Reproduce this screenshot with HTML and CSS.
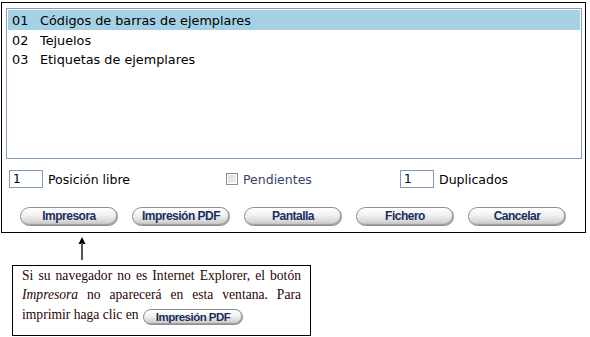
FILE: index.html
```html
<!DOCTYPE html>
<html lang="es">
<head>
    <meta charset="UTF-8">
    <title>Imprimir etiquetas</title>
    <link rel="stylesheet" href="styles.css">
</head>
<body>
    <div class="panel">
        <ul class="listbox">
            <li class="selected"><span class="code">01</span>Códigos de barras de ejemplares</li>
            <li><span class="code">02</span>Tejuelos</li>
            <li><span class="code">03</span>Etiquetas de ejemplares</li>
        </ul>
        <div class="options">
            <label class="field"><input class="num" type="text" value="1">Posición libre</label>
            <label class="field check"><span class="box"></span>Pendientes</label>
            <label class="field"><input class="num" type="text" value="1">Duplicados</label>
        </div>
        <div class="actions">
            <button class="pill">Impresora</button>
            <button class="pill">Impresión PDF</button>
            <button class="pill">Pantalla</button>
            <button class="pill">Fichero</button>
            <button class="pill">Cancelar</button>
        </div>
    </div>

    <div class="pointer">
        <svg xmlns="http://www.w3.org/2000/svg" width="10" height="24" viewBox="0 0 10 24">
            <path d="M5 1 L8.5 8 L1.5 8 Z" fill="#000"/>
            <rect x="4" y="7" width="2" height="17" fill="#555"/>
        </svg>
    </div>

    <div class="note">
        <p class="line">Si su navegador no es Internet Explorer, el botón <em>Impresora</em> no aparecerá en esta ventana. Para</p>
        <p class="line last">imprimir haga clic en <span class="pill small">Impresión PDF</span></p>
    </div>
</body>
</html>
```

FILE: styles.css
```css
* {
    box-sizing: border-box;
}

body {
    margin: 0;
    background: #ffffff;
    color: #000000;
    font-family: "DejaVu Sans", Verdana, sans-serif;
}

.panel {
    width: 585px;
    height: 231px;
    margin: 2px 0 0 1px;
    padding: 5px 0 0 4px;
    border: 1px solid #000000;
}

.listbox {
    list-style: none;
    width: 576px;
    height: 151px;
    margin: 0;
    padding: 1px;
    border: 1px solid #7f9db9;
    font-size: 12.8px;
}

.listbox li {
    height: 19.5px;
    line-height: 21px;
    padding-left: 4px;
}

.listbox li.selected {
    background: #a6d0e4;
}

.listbox .code {
    display: inline-block;
    width: 28px;
}

.options {
    display: grid;
    grid-template-columns: 217px 174px auto;
    margin: 11px 0 0 3px;
    height: 18px;
    font-size: 12.5px;
}

.field {
    display: flex;
    align-items: center;
    gap: 5px;
}

.num {
    width: 34px;
    height: 18px;
    margin: 0;
    padding: 0 3px;
    border: 1px solid #7f9db9;
    font-family: "DejaVu Sans", Verdana, sans-serif;
    font-size: 12px;
    color: #000;
}

.check {
    color: #34446a;
}

.box {
    width: 12px;
    height: 12px;
    border: 1px solid #8c8c8c;
    background: linear-gradient(135deg, #dcdcdc, #f4f4f4);
    box-shadow: inset 0 0 0 1px #ffffff;
}

.actions {
    display: flex;
    gap: 14px;
    margin: 19px 0 0 14px;
}

.pill {
    width: 98px;
    height: 19px;
    padding: 0;
    border: 1px solid #8e8e8e;
    border-radius: 10px;
    background: linear-gradient(#ffffff 0%, #f0f0f0 45%, #d6d6d6 80%, #bdbdbd 100%);
    box-shadow: inset -1px -1px 0 #a0a0a0;
    color: #1a2e5c;
    font-family: "Liberation Sans", Arial, sans-serif;
    font-size: 12px;
    font-weight: bold;
    letter-spacing: -0.5px;
    text-align: center;
    line-height: 17px;
}

.pointer {
    margin: 3px 0 0 77px;
    height: 24px;
}

.pointer svg {
    display: block;
}

.note {
    width: 299px;
    height: 71px;
    margin: 5px 0 0 12px;
    padding: 0 9px;
    border: 1px solid #000000;
    font-family: "Liberation Serif", "Times New Roman", serif;
    font-size: 13.6px;
    line-height: 19px;
    color: #2a0505;
}

.note .line {
    margin: 0;
    text-align: justify;
    text-align-last: justify;
}

.note .line.last {
    margin-top: 2px;
    text-align-last: left;
    line-height: 18px;
}

.note .pill.small {
    display: inline-block;
    width: 100px;
    height: 16px;
    margin-left: 1px;
    line-height: 14px;
    font-size: 11.5px;
    text-align: center;
    text-align-last: center;
    vertical-align: -2px;
}
```
